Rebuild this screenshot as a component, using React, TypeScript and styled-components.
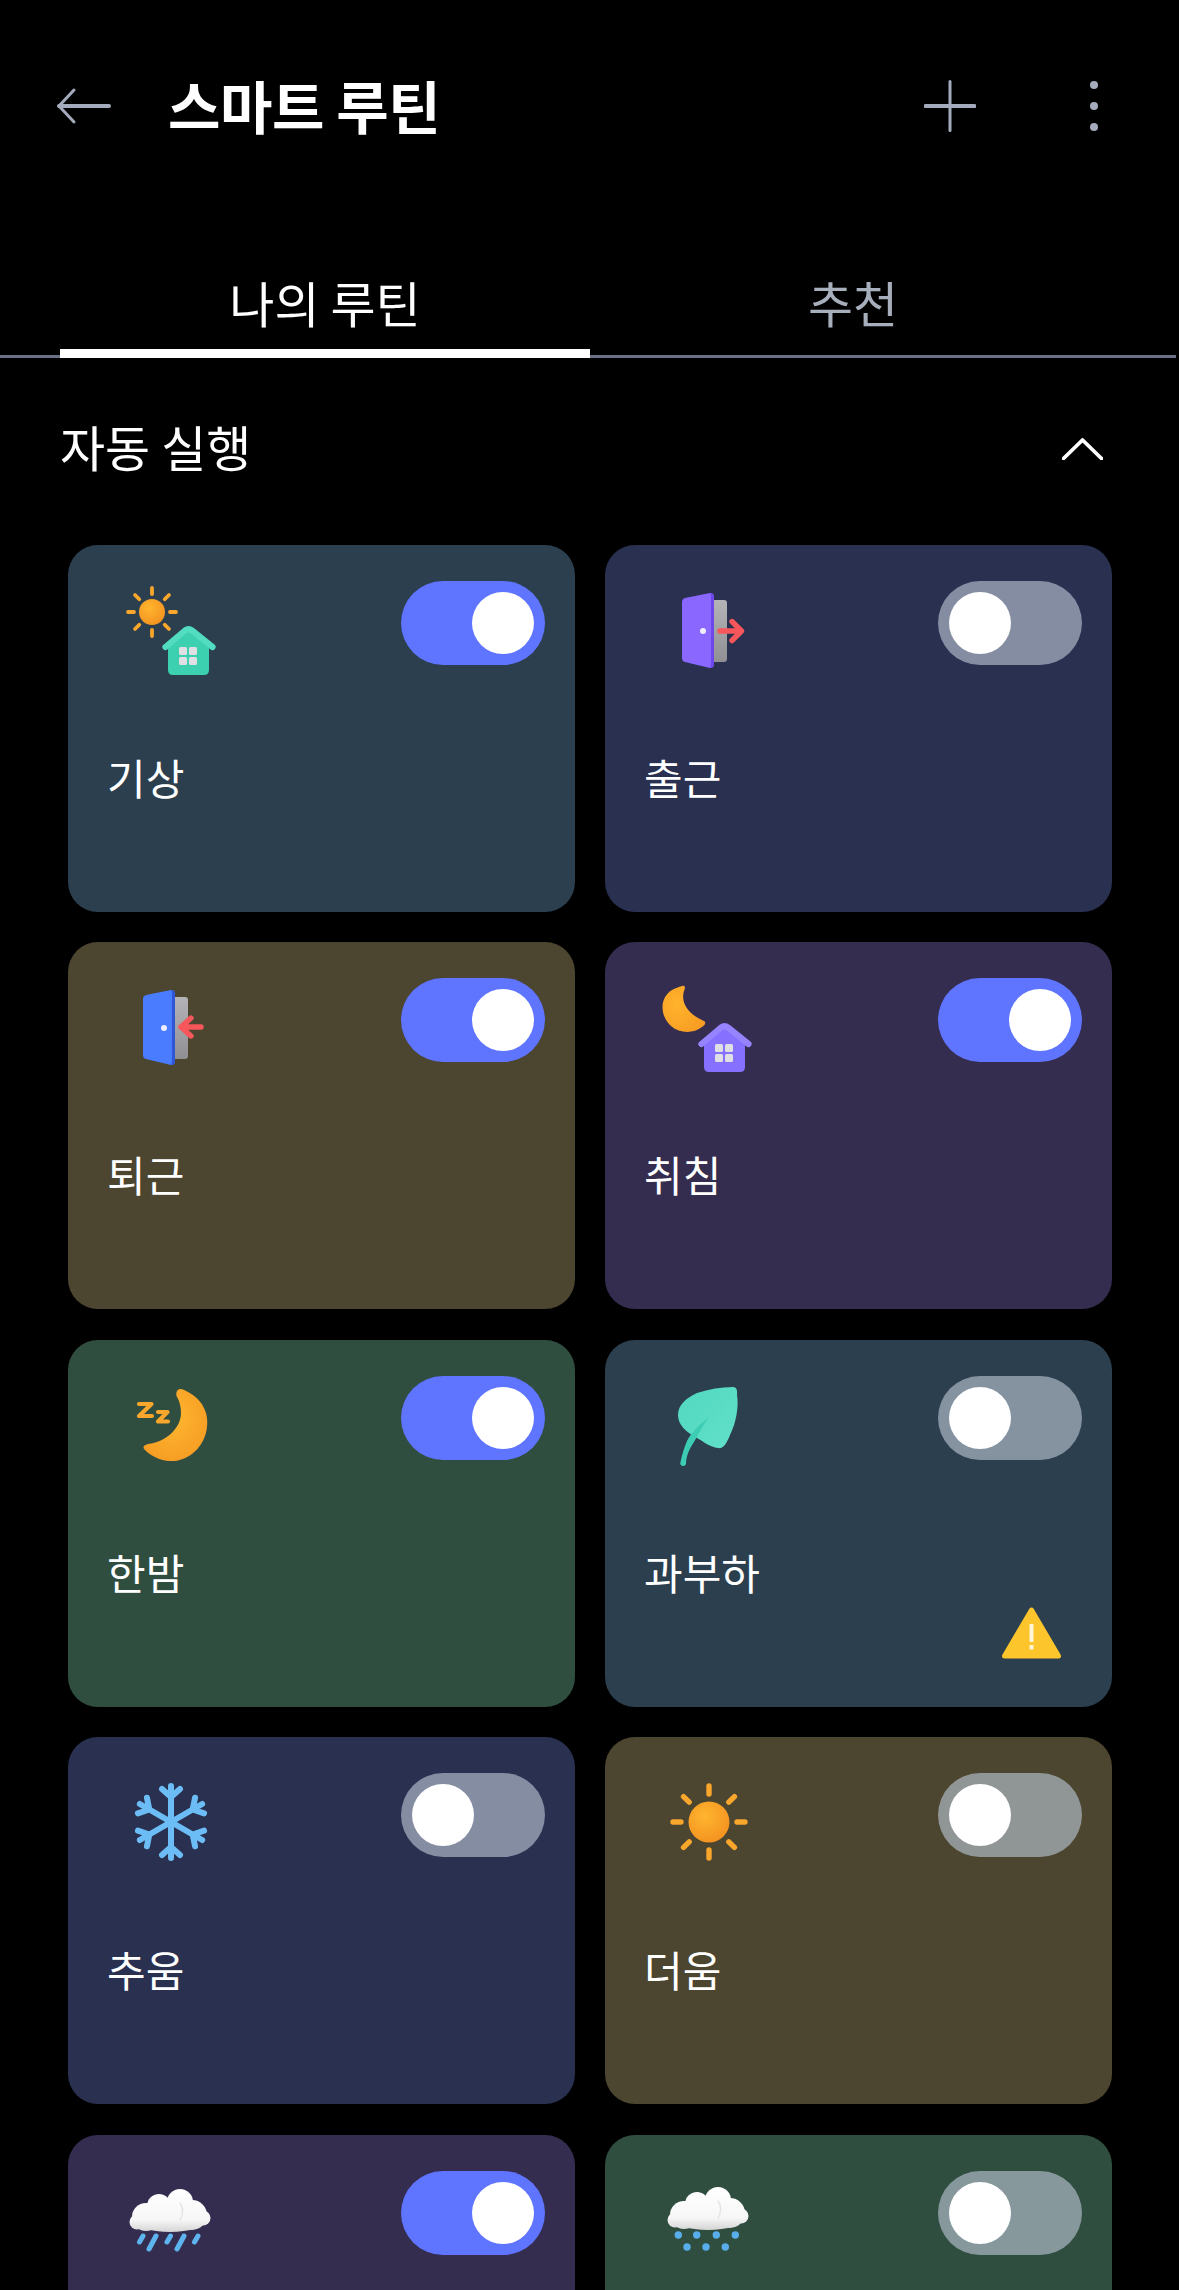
import { ReactNode } from "react";
import styled, { createGlobalStyle } from "styled-components";

const GlobalStyle = createGlobalStyle`
  html, body {
    margin: 0;
    height: 2290px;
    overflow: hidden;
    background: #000;
  }
  * {
    box-sizing: border-box;
  }
`;

const ICON_GREY = "#a3abbd";

const Sun = ({ x, y, r, inner, outer, width, id }: { x: number; y: number; r: number; inner: number; outer: number; width: number; id: string }) => (
  <g>
    <defs>
      <radialGradient id={id} cx="40%" cy="35%" r="75%">
        <stop offset="0%" stopColor="#ffb52e" />
        <stop offset="100%" stopColor="#f28f1f" />
      </radialGradient>
    </defs>
    {[0, 45, 90, 135, 180, 225, 270, 315].map((angle) => (
      <line
        key={angle}
        x1={x}
        y1={y - inner}
        x2={x}
        y2={y - outer}
        stroke="#f9a62c"
        strokeWidth={width}
        strokeLinecap="round"
        transform={`rotate(${angle} ${x} ${y})`}
      />
    ))}
    <circle cx={x} cy={y} r={r} fill={`url(#${id})`} />
  </g>
);

const House = ({ dx, body, roof }: { dx: number; body: string; roof: string }) => (
  <g transform={`translate(${dx} 0)`}>
    <path d="M50 68 L70 52 L91 68 V92 Q91 97 86 97 H55 Q50 97 50 92 Z" fill={body} />
    <path
      d="M47.5 69 L67 52.5 Q70.5 50 74 52.5 L94.5 69"
      fill="none"
      stroke={roof}
      strokeWidth="6.2"
      strokeLinecap="round"
      strokeLinejoin="round"
    />
    <rect x="61" y="69" width="8" height="8" rx="1.5" fill="#e0e0e4" />
    <rect x="71" y="69" width="8" height="8" rx="1.5" fill="#e0e0e4" />
    <rect x="61" y="79" width="8" height="8" rx="1.5" fill="#e0e0e4" />
    <rect x="71" y="79" width="8" height="8" rx="1.5" fill="#e0e0e4" />
  </g>
);

const Door = ({ dx, face, edge, id, arrow }: { dx: number; face: string; edge: string; id: string; arrow: string }) => (
  <g transform={`translate(${dx} 0)`}>
    <defs>
      <linearGradient id={id} x1="0" y1="0" x2="0" y2="1">
        <stop offset="0%" stopColor="#b4b4b8" />
        <stop offset="100%" stopColor="#8f8f94" />
      </linearGradient>
    </defs>
    <rect x="50" y="22" width="22" height="62" rx="3" fill={`url(#${id})`} />
    <path d="M27 24 Q27 21 30 20 L55 15 Q59 15 59 19 V86 Q59 90 55 90 L30 84 Q27 83 27 80 Z" fill={face} />
    <path d="M55 15 Q59 15 59 19 V86 Q59 90 55 90 Q56 88 56 85 V19 Q56 16 55 15 Z" fill={edge} />
    <circle cx="48" cy="53" r="3" fill="#eeeeff" />
    <path d={arrow} fill="none" stroke="#f7575a" strokeWidth="5.4" strokeLinecap="round" strokeLinejoin="round" />
  </g>
);

const Cloud = ({ dx, dy, id }: { dx: number; dy: number; id: string }) => (
  <g transform={`translate(${dx} ${dy})`}>
    <defs>
      <linearGradient id={id} x1="0" y1="21" x2="0" y2="64" gradientUnits="userSpaceOnUse">
        <stop offset="0%" stopColor="#ffffff" />
        <stop offset="72%" stopColor="#f7f7f7" />
        <stop offset="100%" stopColor="#d4d4d4" />
      </linearGradient>
    </defs>
    <g fill={`url(#${id})`}>
      <circle cx="62" cy="34" r="13" />
      <circle cx="41" cy="38" r="12" />
      <circle cx="74" cy="47" r="15" />
      <circle cx="28" cy="49" r="14" />
      <circle cx="85" cy="50" r="7.5" />
      <circle cx="19" cy="54" r="7.5" />
      <ellipse cx="52" cy="52" rx="36" ry="12" />
    </g>
    <path d="M62 35 C66 40 65 47 62 52" fill="none" stroke="#e4e4e4" strokeWidth="1.4" strokeLinecap="round" />
  </g>
);

const WakeIcon = () => (
  <IconSvg viewBox="0 0 110 110">
    <Sun x={34} y={34} r={13} inner={18} outer={24} width={3.8} id="sunA" />
    <House dx={0} body="#3cd0b0" roof="#52dcc0" />
  </IconSvg>
);

const LeaveIcon = () => (
  <IconSvg viewBox="0 0 110 110">
    <Door dx={0} face="#8a68ff" edge="#6d47ea" id="doorA" arrow="M65 53 H86 M77 43.5 L86.5 53 L77 62.5" />
  </IconSvg>
);

const ReturnIcon = () => (
  <IconSvg viewBox="0 0 110 110">
    <Door dx={-2} face="#4a7cff" edge="#3056d8" id="doorB" arrow="M85 52 H65 M75 43 L65 52 L75 61" />
  </IconSvg>
);

const SleepIcon = () => (
  <IconSvg viewBox="0 0 110 110">
    <defs>
      <radialGradient id="moonA" cx="35%" cy="40%" r="80%">
        <stop offset="0%" stopColor="#ffb32c" />
        <stop offset="100%" stopColor="#f79a22" />
      </radialGradient>
    </defs>
    <path
      d="M27 11 C29.5 10 31 12 29 16 C26 25 30 38 49 46 C51.5 47.5 50 50 47 52 C39 58.5 25 59 16 51 C5 41 4 23 17 15 C20 13 24 12 27 11 Z"
      fill="url(#moonA)"
    />
    <House dx={-1} body="#8570ff" roof="#9684ff" />
  </IconSvg>
);

const NightIcon = () => (
  <IconSvg viewBox="0 0 110 110">
    <defs>
      <radialGradient id="moonB" cx="45%" cy="40%" r="70%">
        <stop offset="0%" stopColor="#ffb730" />
        <stop offset="100%" stopColor="#f59a22" />
      </radialGradient>
    </defs>
    <path
      d="M59 18 C62 14 66 17 70 19 C84 26 91 40 89 54 C87 74 70 89 52 88 C42 87.5 33 83 27 77 C24 74 26 72 30 71 C48 69 63 55 63 40 C63 33 61 27 59 24 C58 22 58 20 59 18 Z"
      fill="url(#moonB)"
    />
    <path
      d="M21 31 H33.5 L21 43 H34 M40 39 H49.5 L40 48.5 H50"
      fill="none"
      stroke="#f9a62c"
      strokeWidth="4.2"
      strokeLinejoin="round"
      strokeLinecap="round"
    />
  </IconSvg>
);

const LeafIcon = () => (
  <IconSvg viewBox="0 0 110 110">
    <defs>
      <linearGradient id="leafA" x1="0" y1="0" x2="1" y2="1">
        <stop offset="0%" stopColor="#52d8c0" />
        <stop offset="100%" stopColor="#62e0c8" />
      </linearGradient>
    </defs>
    <path
      d="M78 14 C82 14 82.5 18 82 22 C84 34 81 50 75 62 C71 72 68 76 63 75 C55 74 49 69 42 65 C31 59 23 52 23 42 C23 32 31 25 42 20 C54 16 66 14 78 14 Z"
      fill="url(#leafA)"
    />
    <path
      d="M54 44 C44 52 36 60 32 68 C29 75 27 82 25.5 89 A2.8 2.8 0 0 0 31 91 C31 84 34 76 39 69 C43 62 48 52 54 44 Z"
      fill="#3ccdb4"
    />
  </IconSvg>
);

const ColdIcon = () => (
  <IconSvg viewBox="0 0 110 110">
    <g stroke="#6cbdf5" strokeWidth="6" strokeLinecap="round" fill="none">
      {[0, 60, 120, 180, 240, 300].map((angle) => (
        <path key={angle} d="M53 52 V16 M53 27 L44 19 M53 27 L62 19" transform={`rotate(${angle} 53 52)`} />
      ))}
    </g>
  </IconSvg>
);

const HotIcon = () => (
  <IconSvg viewBox="0 0 110 110">
    <Sun x={54} y={52} r={20.5} inner={28} outer={36} width={5.4} id="sunB" />
  </IconSvg>
);

const RainIcon = () => (
  <IconSvg viewBox="0 0 110 110">
    <Cloud dx={0} dy={0} id="cloudA" />
    <g stroke="#5db4ee" strokeWidth="5" strokeLinecap="round">
      <line x1="25" y1="68" x2="21.5" y2="74" />
      <line x1="38" y1="68" x2="31" y2="81" />
      <line x1="52.5" y1="68" x2="49" y2="74" />
      <line x1="66" y1="68" x2="59" y2="81" />
      <line x1="80" y1="68" x2="76.5" y2="74" />
    </g>
  </IconSvg>
);

const SnowIcon = () => (
  <IconSvg viewBox="0 0 110 110">
    <Cloud dx={1} dy={-2} id="cloudB" />
    <g fill="#58aeea">
      {[23.3, 41.7, 61.3, 80.3].map((cx) => (
        <circle key={cx} cx={cx} cy={67} r="3.7" />
      ))}
      {[32, 51, 70.3].map((cx) => (
        <circle key={cx} cx={cx} cy={79} r="3.7" />
      ))}
    </g>
  </IconSvg>
);

const WarningIcon = () => (
  <WarningBadge viewBox="0 0 59 52">
    <path d="M29.5 3 L56.5 49 H2.5 Z" fill="#fdc52c" stroke="#fdc52c" strokeWidth="5" strokeLinejoin="round" />
    <rect x="27.5" y="17" width="4" height="18" rx="1" fill="#fff6d8" />
    <rect x="27.5" y="38" width="4" height="4.5" fill="#fff6d8" />
  </WarningBadge>
);

interface Routine {
  id: string;
  name?: string;
  bg: string;
  on: boolean;
  icon: ReactNode;
  warning?: boolean;
}

// the last two cards run past the bottom of the screen, so they show no name
const routines: Routine[] = [
  { id: "wake", name: "기상", bg: "#2b3f4f", on: true, icon: <WakeIcon /> },
  { id: "leave", name: "출근", bg: "#293050", on: false, icon: <LeaveIcon /> },
  { id: "return", name: "퇴근", bg: "#4c452f", on: true, icon: <ReturnIcon /> },
  { id: "sleep", name: "취침", bg: "#352d4f", on: true, icon: <SleepIcon /> },
  { id: "night", name: "한밤", bg: "#304e40", on: true, icon: <NightIcon /> },
  { id: "overload", name: "과부하", bg: "#2b3f4f", on: false, icon: <LeafIcon />, warning: true },
  { id: "cold", name: "추움", bg: "#293050", on: false, icon: <ColdIcon /> },
  { id: "hot", name: "더움", bg: "#4c452f", on: false, icon: <HotIcon /> },
  { id: "rain", bg: "#352d4f", on: true, icon: <RainIcon /> },
  { id: "snow", bg: "#304e40", on: false, icon: <SnowIcon /> },
];

export default function App() {
  return (
    <Page>
      <GlobalStyle />
      <TopBar>
        <BackIcon viewBox="0 0 52 34">
          <path d="M52 17 H2" stroke={ICON_GREY} strokeWidth="4" strokeLinecap="round" />
          <path d="M17 1 L2 17 L17 33" stroke={ICON_GREY} strokeWidth="3" strokeLinecap="round" strokeLinejoin="round" fill="none" />
        </BackIcon>
        <Title>스마트 루틴</Title>
        <PlusIcon viewBox="0 0 52 52">
          <path d="M1.5 26 H50.5" stroke={ICON_GREY} strokeWidth="4" strokeLinecap="round" />
          <path d="M26 1.5 V50.5" stroke={ICON_GREY} strokeWidth="3" strokeLinecap="round" />
        </PlusIcon>
        <MoreIcon viewBox="0 0 10 52">
          <circle cx="5" cy="5" r="4" fill={ICON_GREY} />
          <circle cx="5" cy="26" r="4" fill={ICON_GREY} />
          <circle cx="5" cy="47" r="4" fill={ICON_GREY} />
        </MoreIcon>
      </TopBar>
      <TabBar>
        <Tab $active>나의 루틴</Tab>
        <Tab>추천</Tab>
      </TabBar>
      <SectionHead>
        <SectionTitle>자동 실행</SectionTitle>
        <ChevronIcon viewBox="0 0 41 22">
          <path d="M1.5 20.5 L20.5 2 L39.5 20.5" stroke="#fff" strokeWidth="3.8" fill="none" strokeLinecap="round" strokeLinejoin="round" />
        </ChevronIcon>
      </SectionHead>
      <CardGrid>
        {routines.map((routine) => (
          <Card key={routine.id} $bg={routine.bg}>
            <CardTop>
              <IconBox>{routine.icon}</IconBox>
              <Toggle $on={routine.on}>
                <Knob />
              </Toggle>
            </CardTop>
            {routine.name && <CardLabel>{routine.name}</CardLabel>}
            {routine.warning && <WarningIcon />}
          </Card>
        ))}
      </CardGrid>
    </Page>
  );
}

const Page = styled.div`
  width: 1179px;
  height: 2290px;
  overflow: hidden;
  background: #000;
  color: #fff;
  font-family: "Noto Sans CJK KR", "Noto Sans", sans-serif;
`;

const TopBar = styled.div`
  height: 212px;
  display: flex;
  align-items: center;
  padding-left: 57px;
`;

const BackIcon = styled.svg`
  width: 52px;
  height: 34px;
  overflow: visible;
`;

const Title = styled.h1`
  margin: 0 0 3px 59px;
  font-size: 57px;
  font-weight: 700;
  line-height: 1;
  letter-spacing: -0.5px;
`;

const PlusIcon = styled.svg`
  width: 52px;
  height: 52px;
  margin-left: auto;
`;

const MoreIcon = styled.svg`
  width: 10px;
  height: 52px;
  margin-left: 113px;
  margin-right: 80px;
`;

const TabBar = styled.div`
  width: 1176px;
  height: 146px;
  display: flex;
  padding: 0 60px;
  border-bottom: 3px solid #6a7085;
`;

const Tab = styled.div<{ $active?: boolean }>`
  flex: 0 0 ${(props) => (props.$active ? "530px" : "526px")};
  height: 146px;
  display: flex;
  align-items: center;
  justify-content: center;
  padding-top: 42px;
  font-size: 49px;
  line-height: 1;
  color: ${(props) => (props.$active ? "#fff" : "#a8afbc")};
  border-bottom: 9px solid ${(props) => (props.$active ? "#fff" : "transparent")};
`;

const SectionHead = styled.div`
  height: 187px;
  display: flex;
  align-items: center;
  justify-content: space-between;
  padding: 0 76px 5px 60px;
`;

const SectionTitle = styled.h2`
  margin: 0 0 8px;
  font-size: 49px;
  font-weight: 400;
  line-height: 1;
`;

const ChevronIcon = styled.svg`
  width: 41px;
  height: 22px;
`;

const CardGrid = styled.div`
  display: grid;
  grid-template-columns: 507px 507px;
  grid-auto-rows: 367px;
  column-gap: 30px;
  row-gap: 30.4px;
  padding-left: 68px;
`;

const Card = styled.div<{ $bg: string }>`
  position: relative;
  background: ${(props) => props.$bg};
  border-radius: 30px;
  padding: 33px 30px 0 39px;
`;

const CardTop = styled.div`
  display: flex;
  justify-content: space-between;
  align-items: flex-start;
`;

const IconBox = styled.div`
  width: 110px;
  height: 110px;
  margin-left: 11px;
`;

const IconSvg = styled.svg`
  display: block;
  width: 110px;
  height: 110px;
`;

const Toggle = styled.div<{ $on: boolean }>`
  width: 144px;
  height: 84px;
  margin-top: 3px;
  padding: 11px;
  border-radius: 42px;
  display: flex;
  justify-content: ${(props) => (props.$on ? "flex-end" : "flex-start")};
  background: ${(props) => (props.$on ? "#5f74ff" : "rgba(181, 192, 206, 0.65)")};
`;

const Knob = styled.div`
  width: 62px;
  height: 62px;
  border-radius: 50%;
  background: #fff;
`;

const CardLabel = styled.div`
  margin-top: 64px;
  font-size: 42px;
  line-height: 1.2;
  color: #fff;
`;

const WarningBadge = styled.svg`
  position: absolute;
  right: 51px;
  bottom: 48px;
  width: 59px;
  height: 52px;
`;
